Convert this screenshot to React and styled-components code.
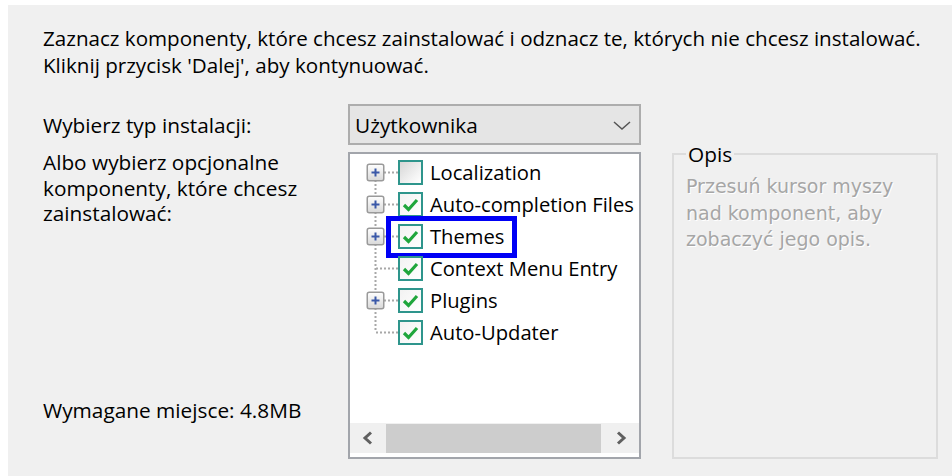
import React from "react";
import styled, { createGlobalStyle } from "styled-components";

const GlobalStyle = createGlobalStyle`
  html, body { margin: 0; padding: 0; background: #ffffff; }
  body { font-family: "Open Sans", "Noto Sans", sans-serif; color: #000; }
  * { box-sizing: border-box; }
`;

const Frame = styled.div`
  padding: 5px 0 0 8px;
  width: 952px;
  height: 476px;
  overflow: hidden;
`;

const Page = styled.div`
  width: 944px;
  height: 471px;
  background: #f0f0f0;
  padding: 20px 0 0 35px;
  font-size: 20.8px;
  line-height: 26.5px;
`;

const Intro = styled.p`
  margin: 0 0 25px 0;
  font-size: 20.6px;
  line-height: 27px;
  white-space: nowrap;
`;

const Layout = styled.div`
  display: grid;
  grid-template-columns: 305px 293px 1fr;
  grid-template-rows: 41px 307px;
  row-gap: 7px;
`;

const Label = styled.div`
  align-self: center;
  padding-top: 2px;
`;

const SideColumn = styled.div`
  display: flex;
  flex-direction: column;
  justify-content: space-between;
  line-height: 25.5px;
  margin-top: -2px;
  padding-bottom: 36px;
`;

const Combo = styled.div`
  display: flex;
  align-items: center;
  justify-content: space-between;
  background: #e5e5e5;
  border: 2px solid #adadad;
  padding: 2px 8px 0 5px;
`;

const Tree = styled.div`
  position: relative;
  display: flex;
  flex-direction: column;
  background: #fff;
  border: 2px solid #a2a5ab;
  padding: 2px 0 4px 0;
  font-size: 20.2px;
`;

const Rows = styled.div`
  flex: 1;
`;

const Row = styled.div`
  position: relative;
  display: flex;
  align-items: center;
  height: 32px;
  padding-left: 8px;
`;

const Check = styled.span`
  display: inline-flex;
  align-items: center;
  justify-content: center;
  width: 25px;
  height: 25px;
  border: 2px solid #2e958c;
  background: ${(p) =>
    p.$checked
      ? "linear-gradient(135deg, #f2f2f2, #ffffff)"
      : "linear-gradient(135deg, #d6d6d6, #f4f4f4 70%, #ffffff)"};
`;

const ItemText = styled.span`
  margin-left: 7px;
  white-space: nowrap;
`;

const Highlight = styled.span`
  position: absolute;
  left: 36px;
  top: -4px;
  width: 131px;
  height: 42px;
  border: 5px solid #0000f5;
  pointer-events: none;
`;

const ScrollBar = styled.div`
  display: grid;
  grid-template-columns: 36px 1fr 37px;
  height: 30px;
  background: #f0f0f0;
`;

const ScrollButton = styled.div`
  display: flex;
  align-items: center;
  justify-content: center;
`;

const Thumb = styled.div`
  background: #cdcdcd;
  margin: 1px 1px 0 0;
`;

const Group = styled.fieldset`
  grid-column: 3;
  width: 266px;
  margin: -8px 0 0 31px;
  border: 2px solid #dcdcdc;
  padding: 0 12px;
  min-width: 0;
`;

const Legend = styled.legend`
  padding: 0 2px;
  line-height: 20px;
`;

const Hint = styled.p`
  margin: 9px 0 0 0;
  font-family: "DejaVu Sans", sans-serif;
  font-size: 19px;
  line-height: 26.5px;
  color: #a6a6a6;
  text-shadow: 1px 1px 0 #ffffff;
  white-space: nowrap;
`;

/* Dotted tree connector with an optional expand box */
const Gutter = ({ plus, pos }) => {
  const dots = "#a8a8a8";
  const v = [];
  if (plus) {
    if (pos !== "first") v.push([0, 8]);
    if (pos !== "last") v.push([24, 32]);
  } else {
    v.push([0, pos === "last" ? 16 : 32]);
  }
  return (
    <svg width="40" height="32" viewBox="0 0 40 32" style={{ flex: "none" }}>
      {v.map(([a, b], i) => (
        <line key={i} x1="17.5" y1={a} x2="17.5" y2={b} stroke={dots} strokeWidth="2" strokeDasharray="2 2" />
      ))}
      <line x1={plus ? 26 : 18} y1="16.5" x2="40" y2="16.5" stroke={dots} strokeWidth="2" strokeDasharray="2 2" />
      {plus && (
        <g>
          <defs>
            <linearGradient id="pb" x1="0" y1="0" x2="0" y2="1">
              <stop offset="0" stopColor="#ffffff" />
              <stop offset="1" stopColor="#d8d8d8" />
            </linearGradient>
          </defs>
          <rect x="9.25" y="8.25" width="16.5" height="16.5" rx="2" fill="url(#pb)" stroke="#9a9a9a" strokeWidth="1.5" />
          <path d="M13.5 16.5h8M17.5 12.5v8" stroke="#3a58a8" strokeWidth="2" />
        </g>
      )}
    </svg>
  );
};

const Tick = () => (
  <svg width="17" height="15" viewBox="0 0 17 15">
    <path d="M2 8l4.5 4.5L15 3" fill="none" stroke="#1fa63c" strokeWidth="3.2" />
  </svg>
);

const items = [
  { name: "Localization", plus: true, checked: false, pos: "first" },
  { name: "Auto-completion Files", plus: true, checked: true },
  { name: "Themes", plus: true, checked: true, mark: true },
  { name: "Context Menu Entry", plus: false, checked: true },
  { name: "Plugins", plus: true, checked: true },
  { name: "Auto-Updater", plus: false, checked: true, pos: "last" },
];

export default function App() {
  return (
    <>
      <GlobalStyle />
      <Frame>
        <Page>
          <Intro>
            Zaznacz komponenty, które chcesz zainstalować i odznacz te, których nie chcesz instalować.
            <br />
            Kliknij przycisk 'Dalej', aby kontynuować.
          </Intro>
          <Layout>
            <Label>Wybierz typ instalacji:</Label>
            <Combo>
              <span>Użytkownika</span>
              <svg width="18" height="9" viewBox="0 0 18 9">
                <path d="M1 1l8 7 8-7" fill="none" stroke="#555" strokeWidth="1.5" />
              </svg>
            </Combo>
            <div />
            <SideColumn>
              <div>
                Albo wybierz opcjonalne
                <br />
                komponenty, które chcesz
                <br />
                zainstalować:
              </div>
              <div>Wymagane miejsce: 4.8MB</div>
            </SideColumn>
            <Tree>
              <Rows>
                {items.map((it) => (
                  <Row key={it.name}>
                    <Gutter plus={it.plus} pos={it.pos} />
                    <Check $checked={it.checked}>{it.checked && <Tick />}</Check>
                    <ItemText>{it.name}</ItemText>
                    {it.mark && <Highlight />}
                  </Row>
                ))}
              </Rows>
              <ScrollBar>
                <ScrollButton>
                  <svg width="12" height="14" viewBox="0 0 12 14">
                    <path d="M9 1.5L3 7l6 5.5" fill="none" stroke="#606060" strokeWidth="3" />
                  </svg>
                </ScrollButton>
                <Thumb />
                <ScrollButton>
                  <svg width="12" height="14" viewBox="0 0 12 14">
                    <path d="M3 1.5L9 7l-6 5.5" fill="none" stroke="#606060" strokeWidth="3" />
                  </svg>
                </ScrollButton>
              </ScrollBar>
            </Tree>
            <Group>
              <Legend>Opis</Legend>
              <Hint>
                Przesuń kursor myszy
                <br />
                nad komponent, aby
                <br />
                zobaczyć jego opis.
              </Hint>
            </Group>
          </Layout>
        </Page>
      </Frame>
    </>
  );
}
